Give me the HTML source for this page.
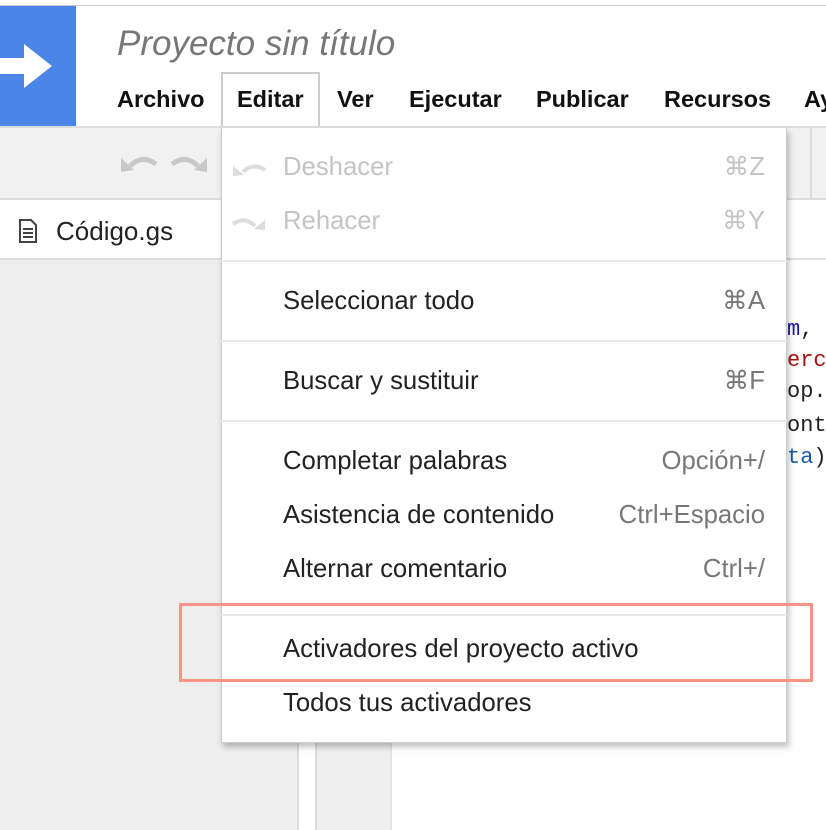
<!DOCTYPE html>
<html><head><meta charset="utf-8"><style>
*{margin:0;padding:0;box-sizing:border-box}
body{width:826px;height:830px;overflow:hidden;background:#fff;font-family:"Liberation Sans",sans-serif;position:relative}
.a{position:absolute}
.mi{position:absolute;left:283px;font-size:25.7px;color:#222;line-height:28px;white-space:nowrap}
.sc{position:absolute;right:22px;font-size:25.7px;color:#777;line-height:28px}
.sep{position:absolute;left:0;right:0;height:2px;background:#e8e8e8}
.mb{position:absolute;top:85px;font-size:23.5px;font-weight:bold;color:#111;line-height:28px}
.code{position:absolute;left:787px;font-family:"Liberation Mono",monospace;font-size:22px;line-height:24px}
</style></head><body>
<div class="a" style="left:0;top:5px;width:826px;height:1px;background:#ccc"></div>
<div class="a" style="left:0;top:6px;width:76px;height:120px;background:#4a86e8"></div>
<svg class="a" style="left:0;top:40px" width="54" height="52"><path d="M0 18H24V4L52 26L24 48V34H0Z" fill="#fff"/></svg>
<div class="a" style="left:117px;top:24px;font-size:35px;font-style:italic;color:#777">Proyecto sin título</div>
<div class="mb" style="left:117px">Archivo</div>
<div class="a" style="left:221px;top:72px;width:99px;height:58px;background:#fff;border:2px solid #ccc;border-bottom:none"></div>
<div class="mb" style="left:237px">Editar</div>
<div class="mb" style="left:337px">Ver</div>
<div class="mb" style="left:409px">Ejecutar</div>
<div class="mb" style="left:536px">Publicar</div>
<div class="mb" style="left:664px">Recursos</div>
<div class="mb" style="left:804px">Ay</div>
<div class="a" style="left:0;top:126px;width:826px;height:2px;background:#ddd"></div>
<div class="a" style="left:0;top:128px;width:826px;height:70px;background:#f1f1f1"></div>
<svg class="a" style="left:118px;top:150px" width="92" height="24"><path d="M12 16Q24 4 38 14" fill="none" stroke="#c8c8c8" stroke-width="5"/><path d="M3 8L16 20L3 22Z" fill="#c8c8c8"/><path d="M80 16Q68 4 54 14" fill="none" stroke="#c8c8c8" stroke-width="5"/><path d="M89 8L76 20L89 22Z" fill="#c8c8c8"/></svg>
<div class="a" style="left:810px;top:128px;width:2px;height:70px;background:#ddd"></div>
<div class="a" style="left:0;top:198px;width:826px;height:2px;background:#ddd"></div>
<svg class="a" style="left:19px;top:219px" width="18" height="24"><path d="M1 1H12L17 6V23H1Z" fill="#fff" stroke="#444" stroke-width="2"/><path d="M4 10H14M4 14H14M4 18H14" stroke="#444" stroke-width="2"/></svg>
<div class="a" style="left:56px;top:216px;font-size:26px;color:#222">Código.gs</div>
<div class="a" style="left:0;top:258px;width:826px;height:2px;background:#ddd"></div>
<div class="a" style="left:0;top:260px;width:297px;height:570px;background:#eee"></div>
<div class="a" style="left:297px;top:260px;width:2px;height:570px;background:#ddd"></div>
<div class="a" style="left:315px;top:260px;width:77px;height:570px;background:#eee;border-left:2px solid #ddd;border-right:2px solid #e4e4e4"></div>
<div class="code" style="top:318px;color:#1a1aa6"><span>m</span><span style="color:#222">,</span></div>
<div class="code" style="top:349px;color:#a11">erc</div>
<div class="code" style="top:380px;color:#222">op.</div>
<div class="code" style="top:414px;color:#222">ont</div>
<div class="code" style="top:446px;color:#1a5aa6">ta<span style="color:#222">)</span></div>
<div class="a" style="left:221px;top:128px;width:566px;height:615px;background:#fff;border:1px solid #ccc;border-top:none;box-shadow:2px 4px 6px rgba(0,0,0,.25)"></div>
<div class="a" style="left:221px;top:126px;width:566px;height:617px">
<svg class="a" style="left:10px;top:30px" width="36" height="20"><path d="M12 16Q22 6 34 14" fill="none" stroke="#ddd" stroke-width="4"/><path d="M2 10L13 19L2 20Z" fill="#ddd"/></svg>
<svg class="a" style="left:10px;top:84px" width="36" height="20"><path d="M24 16Q14 6 2 14" fill="none" stroke="#ddd" stroke-width="4"/><path d="M34 10L23 19L34 20Z" fill="#ddd"/></svg>
<div class="mi" style="left:62px;top:27px;color:#c4c4c4">Deshacer</div><div class="sc" style="top:27px;color:#c4c4c4">⌘Z</div>
<div class="mi" style="left:62px;top:81px;color:#c4c4c4">Rehacer</div><div class="sc" style="top:81px;color:#c4c4c4">⌘Y</div>
<div class="sep" style="top:134px"></div>
<div class="mi" style="left:62px;top:161px">Seleccionar todo</div><div class="sc" style="top:161px">⌘A</div>
<div class="sep" style="top:214px"></div>
<div class="mi" style="left:62px;top:241px">Buscar y sustituir</div><div class="sc" style="top:241px">⌘F</div>
<div class="sep" style="top:294px"></div>
<div class="mi" style="left:62px;top:321px">Completar palabras</div><div class="sc" style="top:321px">Opción+/</div>
<div class="mi" style="left:62px;top:375px">Asistencia de contenido</div><div class="sc" style="top:375px">Ctrl+Espacio</div>
<div class="mi" style="left:62px;top:429px">Alternar comentario</div><div class="sc" style="top:429px">Ctrl+/</div>
<div class="sep" style="top:488px"></div>
<div class="mi" style="left:62px;top:509px">Activadores del proyecto activo</div>
<div class="mi" style="left:62px;top:563px">Todos tus activadores</div>
</div>
<div class="a" style="left:179px;top:603px;width:634px;height:79px;border:3px solid #f79486"></div>
</body></html>
